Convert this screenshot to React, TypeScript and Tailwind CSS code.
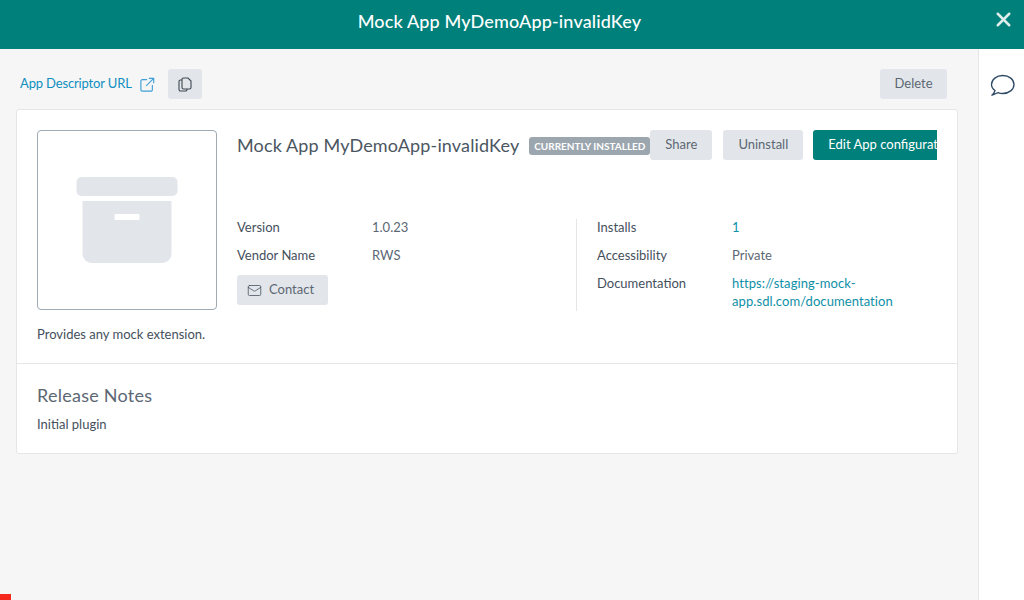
import { X, Mail } from "lucide-react"

function Row({ label, value, link }: { label: string; value: string; link?: boolean }) {
  return (
    <div className="flex min-h-[28px] leading-[18px] -translate-y-px">
      <div className="w-[135px] shrink-0 text-[#45505c]">{label}</div>
      <div className={link ? "text-[#0f8fa8] tracking-[0.08px]" : "text-[#5c6773]"}>{value}</div>
    </div>
  )
}

export default function App() {
  return (
    <div
      className="h-[600px] w-[1024px] overflow-hidden relative flex flex-col bg-white text-[13px] text-[#45505c]"
      style={{ fontFamily: 'Lato, "Noto Sans", sans-serif' }}
    >
      <header className="h-[49px] shrink-0 bg-[#00807a] flex items-center justify-center relative pb-[7px] pr-[25px]">
        <h1 className="text-[18px] tracking-[0.14px] font-medium text-white">Mock App MyDemoApp-invalidKey</h1>
        <button className="absolute right-[9px] top-[8px] text-[#dfeceb]">
          <X size={23} strokeWidth={2.6} />
        </button>
      </header>

      <div className="flex flex-1">
        <main className="w-[978px] bg-[#f6f6f6] pl-[16px] pr-[20px] pt-[20px]">
          <div className="flex items-center h-[30px] pl-[4px] pr-[11px]">
            <a className="text-[#0f8fc0] tracking-[-0.15px] flex items-center">
              App Descriptor URL
              <svg width="15" height="15" viewBox="0 0 17 17" fill="none" stroke="#3f9fd6" strokeWidth="1.3" className="ml-[8px]">
                <path d="M8 3H2.5A1.5 1.5 0 0 0 1 4.5v10A1.5 1.5 0 0 0 2.5 16h10a1.5 1.5 0 0 0 1.5-1.5V9" />
                <path d="M7 10 15.5 1.5M10 1.5h5.5V7" />
              </svg>
            </a>
            <button className="ml-[13px] w-[34px] h-[30px] rounded-[3px] bg-[#e2e6ea] flex items-center justify-center">
              <svg width="14" height="15" viewBox="0 0 14 15" fill="none" stroke="#3c4650" strokeWidth="1.1">
                <path d="M4 3H2.5A1.5 1.5 0 0 0 1 4.5v8A1.5 1.5 0 0 0 2.5 14h5A1.5 1.5 0 0 0 9 12.5V12" />
                <path d="M4 2.5A1.5 1.5 0 0 1 5.5 1H10l3 3v6.5a1.5 1.5 0 0 1-1.5 1.5h-6A1.5 1.5 0 0 1 4 10.5z" />
              </svg>
            </button>
            <button className="ml-auto w-[67px] h-[30px] rounded-[3px] bg-[#e2e6ea] text-[#5c6773]">Delete</button>
          </div>

          <section className="mt-[10px] h-[345px] rounded-[3px] border border-[#e4e6e8] bg-white">
            <div className="px-[20px] pt-[20px] h-[254px] border-b border-[#e4e6e8]">
              <div className="flex">
                <div className="w-[180px] h-[180px] shrink-0 rounded-[4px] border border-[#a0aab2] flex items-center justify-center">
                  <svg width="102" height="88" viewBox="0 0 102 88">
                    <rect x="0.5" y="1" width="101" height="19" rx="5" fill="#e2e6ea" />
                    <path d="M6.5 25h89v53a9 9 0 0 1-9 9h-71a9 9 0 0 1-9-9z" fill="#e2e6ea" />
                    <rect x="38.5" y="38" width="25" height="6" rx="1" fill="#fff" />
                  </svg>
                </div>

                <div className="flex-1 min-w-0 pl-[20px]">
                  <div className="flex items-start h-[89px]">
                    <div className="text-[18px] tracking-[0.14px] leading-[30px] text-[#4b5661] whitespace-nowrap">Mock App MyDemoApp-invalidKey</div>
                    <span className="ml-[10px] mt-[7px] h-[18px] w-[121px] shrink-0 rounded-[3px] bg-[#9ca6af] text-white text-[10px] font-bold leading-[18px] text-center whitespace-nowrap">
                      CURRENTLY INSTALLED
                    </span>
                    <button className="w-[62px] h-[30px] shrink-0 rounded-[3px] bg-[#e2e6ea] text-[#5c6773]">Share</button>
                    <button className="ml-[11px] w-[80px] h-[30px] shrink-0 rounded-[3px] bg-[#e2e6ea] text-[#5c6773]">Uninstall</button>
                    <button className="ml-[10px] w-[124px] h-[30px] shrink-0 overflow-hidden rounded-l-[3px] bg-[#00807a] text-white text-left pl-[15px] whitespace-nowrap">
                      Edit App configuration
                    </button>
                  </div>

                  <div className="flex">
                    <div className="w-[339px] shrink-0 h-[92px]">
                      <Row label="Version" value="1.0.23" />
                      <Row label="Vendor Name" value="RWS" />
                      <button className="w-[91px] h-[30px] rounded-[3px] bg-[#e2e6ea] text-[#5c6773] flex items-center pl-[10px] gap-[7px]">
                        <Mail size={15} strokeWidth={1.25} className="text-[#45505c]" />
                        Contact
                      </button>
                    </div>
                    <div className="flex-1 border-l border-[#e4e6e8] pl-[20px] h-[92px]">
                      <Row label="Installs" value="1" link />
                      <Row label="Accessibility" value="Private" />
                      <Row label="Documentation" value="https://staging-mock-app.sdl.com/documentation" link />
                    </div>
                  </div>
                </div>
              </div>
              <p className="mt-[14px] leading-[18px] text-[#45505c]">Provides any mock extension.</p>
            </div>

            <div className="px-[20px] pt-[18px]">
              <h2 className="text-[18px] tracking-[0.25px] leading-[26px] text-[#5c6773]">Release Notes</h2>
              <p className="mt-[7px] leading-[18px]">Initial plugin</p>
            </div>
          </section>
        </main>

        <aside className="flex-1 border-l border-[#e4e6e8] bg-white flex justify-center pt-[25px]">
          <svg width="25" height="23" viewBox="0 0 25 23" fill="none" stroke="#2f4a66" strokeWidth="1.3" className="ml-[2px]">
            <path d="M5 16.5C2.8 15 1.5 12.8 1.5 10.5 1.5 5.5 6.5 1.5 12.8 1.5S24 5.5 24 10.5 19 19.5 12.8 19.5c-1.8 0-3.4-.3-4.9-.9L1.5 21.5C3.5 20 4.6 18.5 5 16.5z" />
          </svg>
        </aside>
      </div>

      <div className="absolute left-0 bottom-0 w-[11px] h-[6px] bg-[#f5281e]" />
    </div>
  )
}
